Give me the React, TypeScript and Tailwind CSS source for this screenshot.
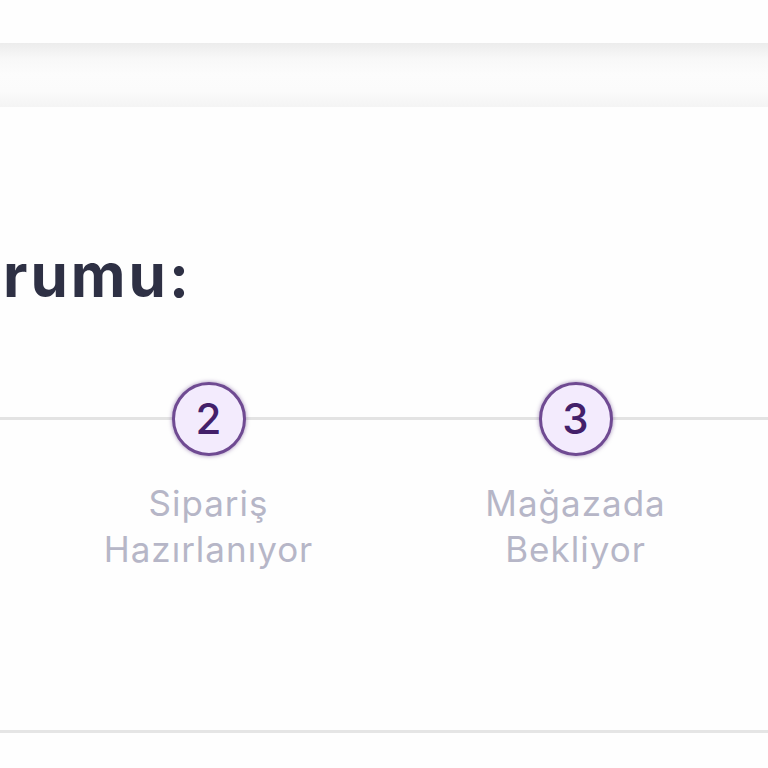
import React from "react";

function Step({ n, lines }: { n: number; lines: string[] }) {
  return (
    <div className="w-[367px] shrink-0 flex flex-col items-center">
      <div className="w-[74px] h-[74px] rounded-full border-[3px] border-[#6f4a92] bg-[#f3ebfd] flex items-center justify-center shadow-[0_0_4px_rgba(90,50,130,0.55)] relative z-10">
        <span className="text-[42px] leading-none font-medium text-[#43206a] [font-family:Inter,'Noto_Sans',sans-serif]">{n}</span>
      </div>
      <div className="mt-[24px] text-center text-[35px] leading-[46px] tracking-[1px] text-[#b6b6c7] [font-family:Inter,'Noto_Sans',sans-serif]">
        {lines.map((l) => (
          <div key={l}>{l}</div>
        ))}
      </div>
    </div>
  );
}

export default function App() {
  return (
    <div className="w-[768px] h-[768px] bg-[#fefefe] overflow-hidden flex flex-col">
      <div className="mt-[43px] h-[64px] bg-[linear-gradient(to_bottom,#ececec,#f8f8f8_25%,#fcfcfc_50%,#fbfbfb_75%,#f4f4f4)]" />
      <div className="mt-[132px] w-[192px] flex justify-end">
        <h1 className="whitespace-nowrap text-[60px] leading-[72px] font-bold tracking-[3px] text-[#2e3044] [font-family:Inter,'Noto_Sans',sans-serif]">
          Sipariş Durumu:
        </h1>
      </div>
      <div className="relative mt-[71px]">
        <div className="absolute left-0 right-0 top-[35px] h-[3px] bg-[#e3e3e3]" />
        <div className="flex ml-[-342px]">
          <Step n={1} lines={["Sipariş", "Alındı"]} />
          <Step n={2} lines={["Sipariş", "Hazırlanıyor"]} />
          <Step n={3} lines={["Mağazada", "Bekliyor"]} />
          <Step n={4} lines={["Teslim", "Edildi"]} />
        </div>
      </div>
      <div className="mt-[158px] h-[3px] bg-[#e5e5e5]" />
    </div>
  );
}
